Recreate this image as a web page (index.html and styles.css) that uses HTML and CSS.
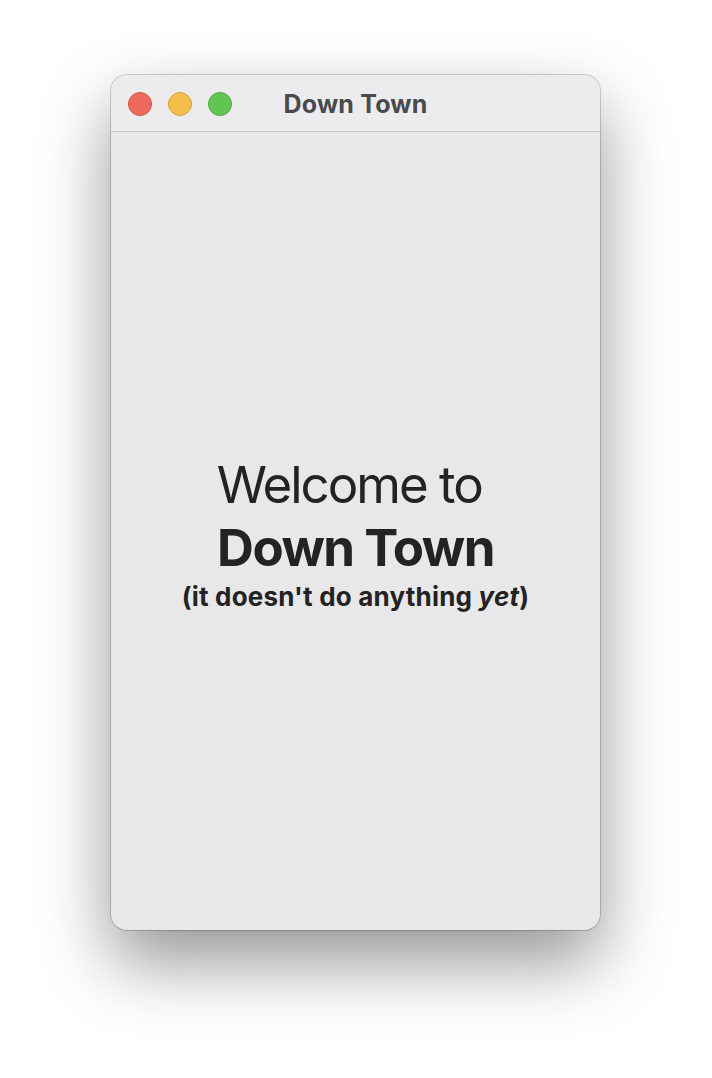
FILE: index.html
```html
<!DOCTYPE html>
<html lang="en">
<head>
<meta charset="utf-8">
<title>Down Town</title>
<link rel="stylesheet" href="styles.css">
</head>
<body>
<div class="window">
  <div class="titlebar">
    <div class="lights">
      <span class="light red"></span>
      <span class="light yellow"></span>
      <span class="light green"></span>
    </div>
    <div class="title">Down Town</div>
  </div>
  <div class="content">
    <div class="welcome">Welcome to&nbsp;</div>
    <div class="name">Down Town</div>
    <div class="sub">(it doesn't do anything <em>yet</em>)</div>
  </div>
</div>
</body>
</html>
```
FILE: styles.css
```css
html, body {
  margin: 0;
  padding: 0;
  background: #ffffff;
}
body {
  font-family: Inter, "Noto Sans", "Liberation Sans", sans-serif;
  padding: 75px 0 0 111px;
  height: 1078px;
  box-sizing: border-box;
  overflow: hidden;
}
.window {
  width: 489px;
  height: 855px;
  border-radius: 16px;
  background: #e8e8eb;
  box-shadow: 0 0 0 1px rgba(0,0,0,0.18), 0 32px 70px rgba(0,0,0,0.42);
  display: flex;
  flex-direction: column;
  overflow: hidden;
  position: relative;
}
.titlebar {
  height: 56px;
  border-bottom: 1px solid #c9c9cb;
  background: #ececee;
  display: flex;
  align-items: center;
  position: relative;
  flex-shrink: 0;
}
.lights {
  display: flex;
  gap: 16px;
  padding-left: 17px;
  padding-top: 1px;
}
.light {
  width: 22px;
  height: 22px;
  border-radius: 50%;
  display: block;
}
.red { background: #ee6a5e; border: 1px solid #d85346; }
.yellow { background: #f5bf4f; border: 1px solid #d9a23a; }
.green { background: #61c554; border: 1px solid #4ba93f; }
.title {
  position: absolute;
  left: 0;
  right: 0;
  top: 0;
  bottom: 0;
  display: flex;
  align-items: center;
  justify-content: center;
  font-size: 25px;
  font-weight: 700;
  color: #4a4a4c;
  letter-spacing: 0.2px;
  padding-top: 2px;
  pointer-events: none;
}
.content {
  flex: 1;
  display: flex;
  flex-direction: column;
  align-items: center;
  justify-content: center;
  color: #232323;
  text-align: center;
  padding-top: 2px;
}
.welcome {
  font-size: 51px;
  font-weight: 400;
  line-height: 63px;
  letter-spacing: -2px;
}
.name {
  font-size: 51px;
  font-weight: 700;
  line-height: 63px;
  letter-spacing: -1.5px;
}
.sub {
  font-size: 26px;
  font-weight: 700;
  line-height: 30px;
  letter-spacing: 0.2px;
  margin-top: 3px;
}
.sub em {
  font-style: italic;
}
```
